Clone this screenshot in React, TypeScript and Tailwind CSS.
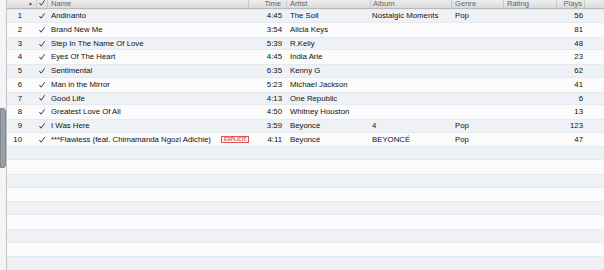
import React from 'react';

type Track = {
  n: number;
  name: string;
  explicit?: boolean;
  time: string;
  artist: string;
  album?: string;
  genre?: string;
  plays: number;
};

const tracks: Track[] = [
  { n: 1, name: 'Andinanto', time: '4:45', artist: 'The Soil', album: 'Nostalgic Moments', genre: 'Pop', plays: 56 },
  { n: 2, name: 'Brand New Me', time: '3:54', artist: 'Alicia Keys', plays: 81 },
  { n: 3, name: 'Step In The Name Of Love', time: '5:39', artist: 'R.Kelly', plays: 48 },
  { n: 4, name: 'Eyes Of The Heart', time: '4:45', artist: 'India Arie', plays: 23 },
  { n: 5, name: 'Sentimental', time: '6:35', artist: 'Kenny G', plays: 62 },
  { n: 6, name: 'Man in the Mirror', time: '5:23', artist: 'Michael Jackson', plays: 41 },
  { n: 7, name: 'Good Life', time: '4:13', artist: 'One Republic', plays: 6 },
  { n: 8, name: 'Greatest Love Of All', time: '4:50', artist: 'Whitney Houston', plays: 13 },
  { n: 9, name: 'I Was Here', time: '3:59', artist: 'Beyoncé', album: '4', genre: 'Pop', plays: 123 },
  { n: 10, name: '***Flawless (feat. Chimamanda Ngozi Adichie)', explicit: true, time: '4:11', artist: 'Beyoncé', album: 'BEYONCÉ', genre: 'Pop', plays: 47 },
];

const font = { fontFamily: '"Liberation Sans", Arial, sans-serif' };

// small tick used for the "checked" column
function Tick({ color = '#3a3a3a' }: { color?: string }) {
  return (
    <svg width="6" height="6" viewBox="0 0 6 6" className="block">
      <path d="M0.6 3.2 L2.2 5.2 L5.4 0.6" fill="none" stroke={color} strokeWidth="1" strokeLinecap="round" strokeLinejoin="round" />
    </svg>
  );
}

function HeaderCell({ className, children }: { className: string; children?: React.ReactNode }) {
  return (
    <div className={`h-full flex items-start overflow-hidden border-r border-[#c9c9c9] leading-[7px] ${className}`}>
      {children}
    </div>
  );
}

function Row({ t, striped }: { t?: Track; striped: boolean }) {
  return (
    <div
      className={`flex items-center h-[14.4px] text-[7.8px] text-[#111] ${
        striped ? 'bg-[#eef2f6] border-y border-[#e6eaef]' : 'bg-[#fbfbfb]'
      }`}
    >
      <div className="w-[30px] text-right pr-[15px]">{t?.n}</div>
      <div className="w-[11px] pl-[2px]">{t && <Tick />}</div>
      <div className="w-[201px] pl-[3px] flex items-center whitespace-nowrap overflow-hidden">
        {t?.name}
        {t?.explicit && (
          <span className="ml-[10px] border border-[#e0555a] text-[#e0555a] text-[5px] leading-[5px] px-[2px] font-bold">
            EXPLICIT
          </span>
        )}
      </div>
      <div className="w-[38px] text-right pr-[5px]">{t?.time}</div>
      <div className="w-[84px] pl-[3px] whitespace-nowrap overflow-hidden">{t?.artist}</div>
      <div className="w-[81px] pl-[1px] whitespace-nowrap overflow-hidden">{t?.album}</div>
      <div className="w-[52px] pl-[3px]">{t?.genre}</div>
      <div className="w-[53px]" />
      <div className="w-[28px] text-right pr-[2px]">{t?.plays}</div>
      <div className="flex-1" />
    </div>
  );
}

export default function App() {
  const empties = Array.from({ length: 9 });
  return (
    <div className="w-[604px] h-[270px] overflow-hidden flex bg-[#fbfbfb]" style={font}>
      {/* scroll gutter */}
      <div className="w-[7px] h-full flex flex-col bg-[#f4f4f4] border-r border-[#c4c4c4]">
        <div className="h-[108px]" />
        <div className="h-[60px] w-[6px] bg-[#99a0a8] border border-[#7f868e] rounded-r-[3px]" />
      </div>

      <div className="flex-1 flex flex-col">
        {/* header */}
        <div className="h-[9.6px] flex bg-gradient-to-b from-[#ededed] to-[#dadada] border-b border-[#b8b8b8] text-[7.6px] text-[#666]">
          <HeaderCell className="w-[30px] justify-end pr-[3px]">
            <span className="text-[5px] leading-[7px] text-[#555]">▲</span>
          </HeaderCell>
          <HeaderCell className="w-[11px] pl-[2px]">
            <Tick color="#444" />
          </HeaderCell>
          <HeaderCell className="w-[201px] pl-[3px]">Name</HeaderCell>
          <HeaderCell className="w-[38px] justify-end pr-[5px]">Time</HeaderCell>
          <HeaderCell className="w-[84px] pl-[3px]">Artist</HeaderCell>
          <HeaderCell className="w-[81px] pl-[2px]">Album</HeaderCell>
          <HeaderCell className="w-[52px] pl-[3px]">Genre</HeaderCell>
          <HeaderCell className="w-[53px] pl-[3px]">Rating</HeaderCell>
          <HeaderCell className="w-[28px] justify-end pr-[2px]">Plays</HeaderCell>
          <div className="flex-1" />
        </div>

        {tracks.map((t, i) => (
          <Row key={t.n} t={t} striped={i % 2 === 0} />
        ))}
        {empties.map((_, i) => (
          <Row key={'e' + i} striped={i % 2 === 0} />
        ))}
      </div>
    </div>
  );
}
